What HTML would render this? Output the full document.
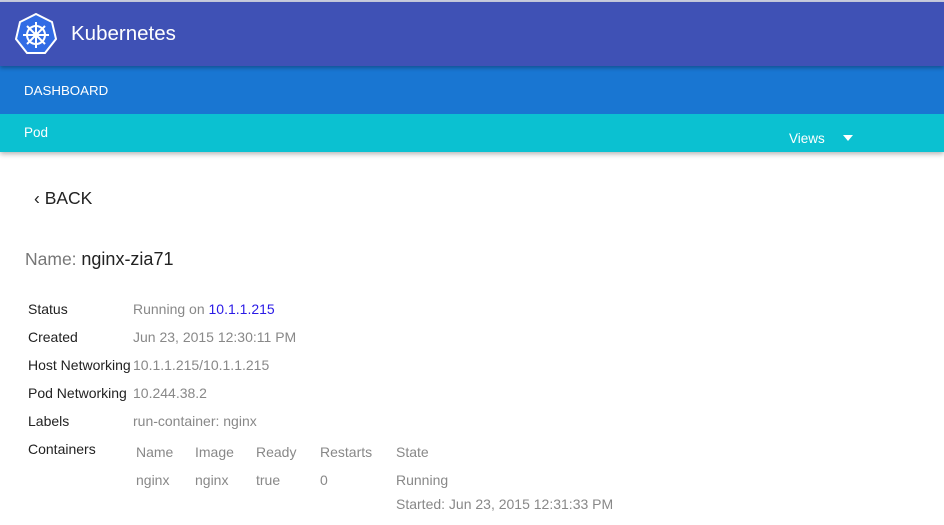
<!DOCTYPE html>
<html><head><style>
body{margin:0;width:944px;height:525px;overflow:hidden;background:#fff;font-family:"Liberation Sans",sans-serif;position:relative}
.top{position:absolute;left:0;top:0;width:944px;height:2px;background:#c9cde0}
.h1{position:absolute;left:0;top:2px;width:944px;height:64px;background:#3f51b5;box-shadow:0 2px 4px rgba(0,0,0,.3);z-index:3}
.h1 .t{position:absolute;left:71px;top:20px;color:#fff;font-size:20.5px}
.h2{position:absolute;left:0;top:66px;width:944px;height:48px;background:#1976d2;z-index:2}
.h2 span{position:absolute;left:24px;top:17px;color:#fff;font-size:13.3px}
.h3{position:absolute;left:0;top:114px;width:944px;height:38px;background:#0bc1d1;box-shadow:0 2px 5px rgba(0,0,0,.3);z-index:1}
.h3 .p{position:absolute;left:24px;top:11px;color:#fff;font-size:13.5px}
.h3 .v{position:absolute;left:789px;top:17px;color:#fff;font-size:13.5px}
.h3 .a{position:absolute;left:843px;top:21px;width:0;height:0;border-left:5px solid transparent;border-right:5px solid transparent;border-top:6px solid #fff}
.back{position:absolute;left:34px;top:188px;font-size:17.5px;color:#222}
.name{position:absolute;left:25px;top:249px;font-size:17.5px;color:#777}
.name b{font-weight:normal;color:#222;font-size:18px}
.l{position:absolute;left:28px;font-size:14px;color:#222}
.r{position:absolute;left:133px;font-size:14px;color:#888}
.c{position:absolute;font-size:14px;color:#888}
</style></head><body>
<div class="top"></div>
<div class="h1">
<svg style="position:absolute;left:15px;top:11px" width="42" height="42" viewBox="0 0 42 42">
<polygon points="21,1 37,9 41,26 30,40 12,40 1,26 5,9" fill="#326ce5" stroke="#fff" stroke-width="2"/>
<g stroke="#fff" stroke-width="2" fill="none"><circle cx="21" cy="22" r="9"/>
<line x1="21" y1="9" x2="21" y2="35"/><line x1="8" y1="22" x2="34" y2="22"/><line x1="12" y1="13" x2="30" y2="31"/><line x1="30" y1="13" x2="12" y2="31"/></g>
<circle cx="21" cy="22" r="3" fill="#fff"/></svg>
<span class="t">Kubernetes</span></div>
<div class="h2"><span>DASHBOARD</span></div>
<div class="h3"><span class="p">Pod</span><span class="v">Views</span><div class="a"></div></div>
<div class="back">‹ BACK</div>
<div class="name">Name: <b>nginx-zia71</b></div>
<div class="l" style="top:301px">Status</div><div class="r" style="top:301px">Running on <span style="color:#2a1ae6">10.1.1.215</span></div>
<div class="l" style="top:329px">Created</div><div class="r" style="top:329px">Jun 23, 2015 12:30:11 PM</div>
<div class="l" style="top:357px">Host Networking</div><div class="r" style="top:357px">10.1.1.215/10.1.1.215</div>
<div class="l" style="top:385px">Pod Networking</div><div class="r" style="top:385px">10.244.38.2</div>
<div class="l" style="top:413px">Labels</div><div class="r" style="top:413px">run-container: nginx</div>
<div class="l" style="top:441px">Containers</div>
<div class="c" style="left:136px;top:444px">Name</div><div class="c" style="left:195px;top:444px">Image</div><div class="c" style="left:256px;top:444px">Ready</div><div class="c" style="left:320px;top:444px">Restarts</div><div class="c" style="left:396px;top:444px">State</div>
<div class="c" style="left:136px;top:472px">nginx</div><div class="c" style="left:195px;top:472px">nginx</div><div class="c" style="left:256px;top:472px">true</div><div class="c" style="left:320px;top:472px">0</div><div class="c" style="left:396px;top:472px">Running</div>
<div class="c" style="left:396px;top:496px">Started: Jun 23, 2015 12:31:33 PM</div>
</body></html>
